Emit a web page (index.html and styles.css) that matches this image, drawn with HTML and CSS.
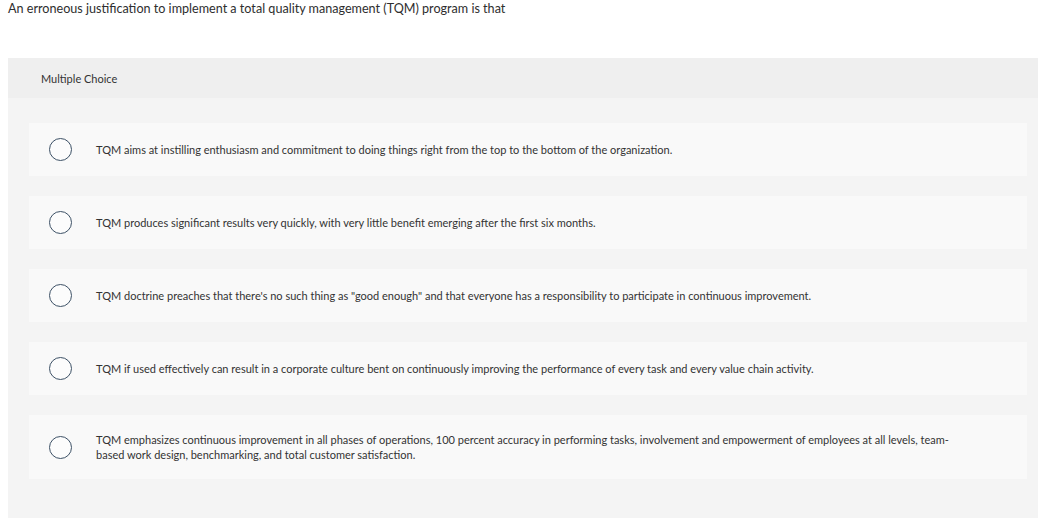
FILE: index.html
```html
<!DOCTYPE html>
<html lang="en">
<head>
<meta charset="utf-8">
<title>Multiple Choice</title>
<link rel="stylesheet" href="styles.css">
</head>
<body>
<p class="question">An erroneous justification to implement a total quality management (TQM) program is that</p>
<section class="panel">
  <div class="panel-head">Multiple Choice</div>
  <div class="options">
    <div class="option"><span class="radio"></span><span class="label">TQM aims at instilling enthusiasm and commitment to doing things right from the top to the bottom of the organization.</span></div>
    <div class="option"><span class="radio"></span><span class="label">TQM produces significant results very quickly, with very little benefit emerging after the first six months.</span></div>
    <div class="option"><span class="radio"></span><span class="label">TQM doctrine preaches that there's no such thing as "good enough" and that everyone has a responsibility to participate in continuous improvement.</span></div>
    <div class="option"><span class="radio"></span><span class="label">TQM if used effectively can result in a corporate culture bent on continuously improving the performance of every task and every value chain activity.</span></div>
    <div class="option"><span class="radio"></span><span class="label">TQM emphasizes continuous improvement in all phases of operations, 100 percent accuracy in performing tasks, involvement and empowerment of employees at all levels, team-based work design, benchmarking, and total customer satisfaction.</span></div>
  </div>
</section>
</body>
</html>
```
FILE: styles.css
```css
html, body {
  margin: 0;
  padding: 0;
  background: #ffffff;
}
body {
  font-family: Lato, "Open Sans", "Liberation Sans", sans-serif;
  color: #333333;
  padding: 0 0 0 8px;
  overflow: hidden;
}
.question {
  margin: 0;
  padding-top: 1px;
  font-size: 12.6px;
  line-height: 16px;
  color: #2e2e2e;
  height: 57px;
}
.panel {
  background: #f4f4f4;
  min-height: 470px;
}
.panel-head {
  background: #efefef;
  height: 40px;
  display: flex;
  align-items: center;
  padding-left: 33px;
  font-size: 11px;
  color: #333;
}
.options {
  padding: 25px 11px 40px 21px;
  display: flex;
  flex-direction: column;
  gap: 20px;
}
.option {
  background: #f9f9f9;
  display: flex;
  align-items: center;
  min-height: 53px;
  padding: 17px 62px 17px 20px;
  box-sizing: border-box;
}
.radio {
  flex: none;
  width: 21px;
  height: 21px;
  border: 1px solid #3d5166;
  border-radius: 50%;
  background: #fcfcfc;
  margin: -4px 24px -4px 0;
}
.label {
  font-size: 11px;
  line-height: 15px;
  color: #333;
}
```
